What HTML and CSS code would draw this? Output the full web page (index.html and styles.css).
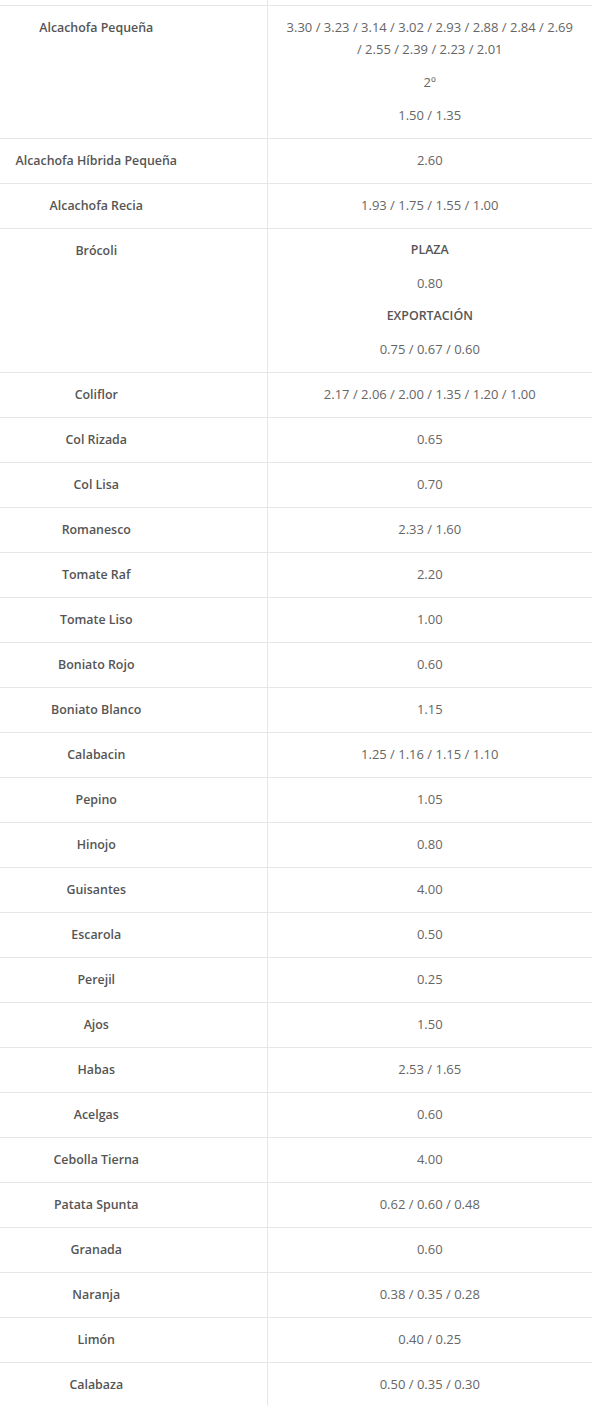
FILE: index.html
```html
<!DOCTYPE html>
<html lang="es">
<head>
<meta charset="utf-8">
<title>Precios</title>
<link rel="stylesheet" href="styles.css">
</head>
<body>
<table class="prices">
  <colgroup>
    <col class="col-name">
    <col class="col-val">
  </colgroup>
  <tbody>
    <tr class="stub"><td></td><td></td></tr>
    <tr><td class="name">Alcachofa Pequeña</td><td class="val"><p>3.30 / 3.23 / 3.14 / 3.02 / 2.93 / 2.88 / 2.84 / 2.69 / 2.55 / 2.39 / 2.23 / 2.01</p><p>2º</p><p>1.50 / 1.35</p></td></tr>
    <tr><td class="name">Alcachofa Híbrida Pequeña</td><td class="val">2.60</td></tr>
    <tr><td class="name">Alcachofa Recia</td><td class="val">1.93 / 1.75 / 1.55 / 1.00</td></tr>
    <tr><td class="name">Brócoli</td><td class="val"><p class="label">PLAZA</p><p>0.80</p><p class="label">EXPORTACIÓN</p><p>0.75 / 0.67 / 0.60</p></td></tr>
    <tr><td class="name">Coliflor</td><td class="val">2.17 / 2.06 / 2.00 / 1.35 / 1.20 / 1.00</td></tr>
    <tr><td class="name">Col Rizada</td><td class="val">0.65</td></tr>
    <tr><td class="name">Col Lisa</td><td class="val">0.70</td></tr>
    <tr><td class="name">Romanesco</td><td class="val">2.33 / 1.60</td></tr>
    <tr><td class="name">Tomate Raf</td><td class="val">2.20</td></tr>
    <tr><td class="name">Tomate Liso</td><td class="val">1.00</td></tr>
    <tr><td class="name">Boniato Rojo</td><td class="val">0.60</td></tr>
    <tr><td class="name">Boniato Blanco</td><td class="val">1.15</td></tr>
    <tr><td class="name">Calabacin</td><td class="val">1.25 / 1.16 / 1.15 / 1.10</td></tr>
    <tr><td class="name">Pepino</td><td class="val">1.05</td></tr>
    <tr><td class="name">Hinojo</td><td class="val">0.80</td></tr>
    <tr><td class="name">Guisantes</td><td class="val">4.00</td></tr>
    <tr><td class="name">Escarola</td><td class="val">0.50</td></tr>
    <tr><td class="name">Perejil</td><td class="val">0.25</td></tr>
    <tr><td class="name">Ajos</td><td class="val">1.50</td></tr>
    <tr><td class="name">Habas</td><td class="val">2.53 / 1.65</td></tr>
    <tr><td class="name">Acelgas</td><td class="val">0.60</td></tr>
    <tr><td class="name">Cebolla Tierna</td><td class="val">4.00</td></tr>
    <tr><td class="name">Patata Spunta</td><td class="val">0.62 / 0.60 / 0.48</td></tr>
    <tr><td class="name">Granada</td><td class="val">0.60</td></tr>
    <tr><td class="name">Naranja</td><td class="val">0.38 / 0.35 / 0.28</td></tr>
    <tr><td class="name">Limón</td><td class="val">0.40 / 0.25</td></tr>
    <tr><td class="name">Calabaza</td><td class="val">0.50 / 0.35 / 0.30</td></tr>
  </tbody>
</table>
</body>
</html>
```

FILE: styles.css
```css
html, body {
  margin: 0;
  padding: 0;
  background: #ffffff;
}

body {
  font-family: "Open Sans", "Liberation Sans", sans-serif;
  font-size: 13px;
  line-height: 22px;
  color: #666666;
}

.prices {
  width: 592px;
  border-collapse: collapse;
  table-layout: fixed;
}

.prices .col-name {
  width: 267px;
}

.prices .col-val {
  width: 325px;
}

.prices td {
  border: 1px solid #e6e6e6;
  border-left: none;
  border-top: none;
  padding: 10px 18px 12px;
  text-align: center;
  vertical-align: top;
}

.prices td:last-child {
  border-right: none;
}

.prices td.name {
  padding: 11px 85px 11px 11px;
  font-size: 12.4px;
  font-weight: 600;
  color: #555555;
}

.prices td.val {
  color: #666666;
}

.prices tr.stub td {
  height: 5px;
  padding: 0;
}

.prices td.val p {
  margin: 0;
}

.prices td.val p + p {
  margin-top: 11px;
}

.prices td.val p.label {
  font-size: 12.4px;
  font-weight: 600;
  color: #555555;
}
```
